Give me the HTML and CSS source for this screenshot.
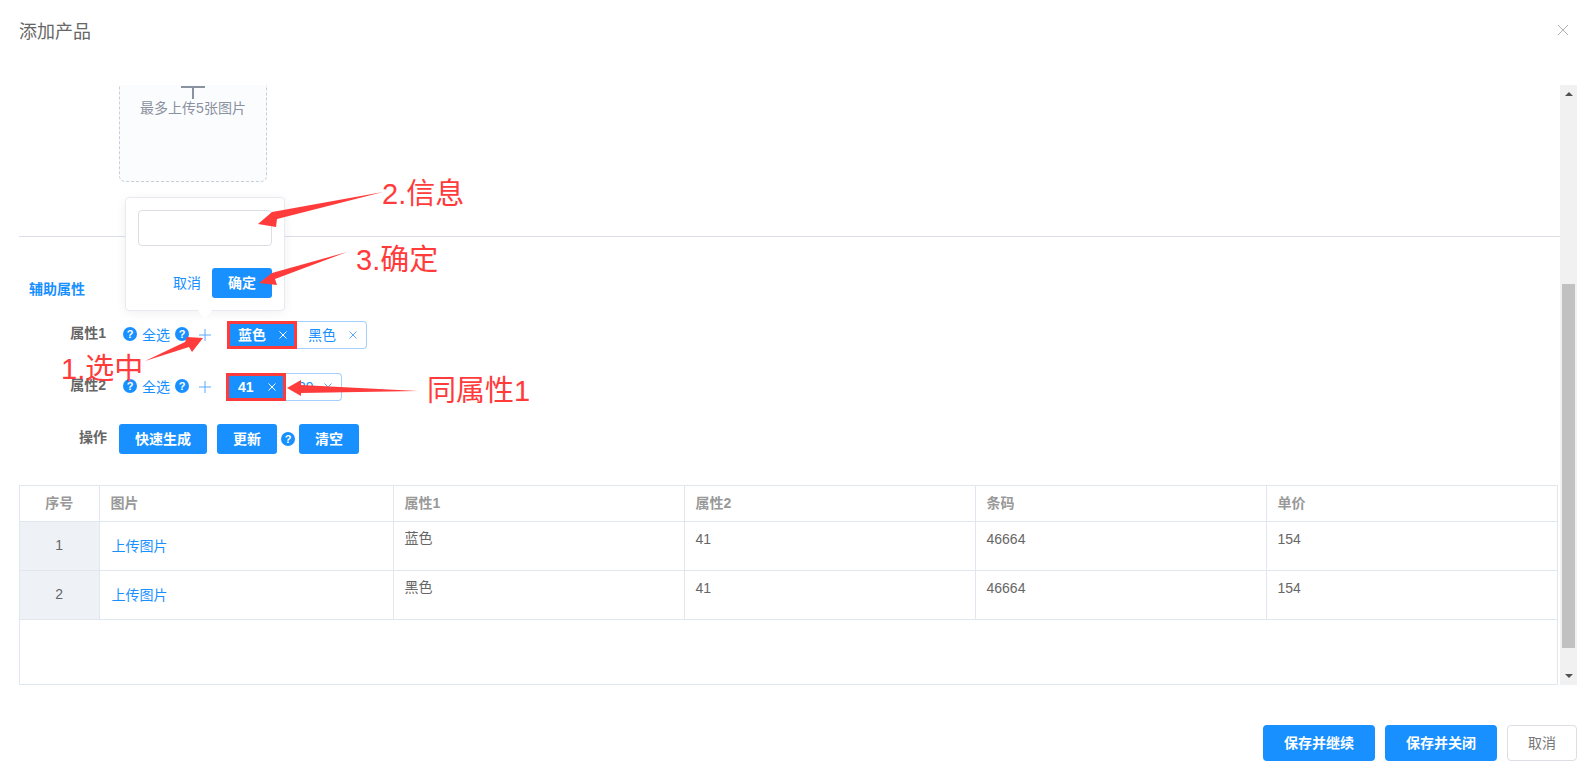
FILE: index.html
```html
<!DOCTYPE html>
<html lang="zh-CN">
<head>
  <meta charset="UTF-8">
  <title>添加产品</title>
  <link rel="stylesheet" href="styles.css">
</head>
<body>
  <div class="modal">
    <div class="modal-header">
      <span class="modal-title">添加产品</span>
      <svg class="modal-close" width="12" height="12" viewBox="0 0 12 12"><path d="M1 1l10 10M11 1L1 11" stroke="#b4b4b4" stroke-width="1" fill="none"/></svg>
    </div>

    <div class="modal-main">
      <div class="content">
        <!-- upload box, top part is scrolled away -->
        <div class="upload-box">
          <svg class="upload-plus" width="24" height="24" viewBox="0 0 24 24"><path d="M0 11h24v2H0zM11 11h2v13h-2z" fill="#8a919f"/></svg>
          <span>最多上传5张图片</span>
        </div>
        <div class="divider"></div>

        <div class="section-title">辅助属性</div>

        <div class="attr-row row-first">
          <span class="attr-label">属性1</span>
          <span class="help">?</span>
          <a class="link">全选</a>
          <span class="help">?</span>
          <svg class="plus" width="12" height="12" viewBox="0 0 12 12"><path d="M6 0v12M0 6h12" stroke="#5aaafa" stroke-width="1" fill="none"/></svg>
          <div class="tags">
            <span class="tag tag-on tag-w70"><b>蓝色</b><svg class="tag-x" width="8" height="8" viewBox="0 0 8 8"><path d="M.5.5l7 7M7.5.5l-7 7"/></svg></span>
            <span class="tag tag-w70">黑色<svg class="tag-x" width="8" height="8" viewBox="0 0 8 8"><path d="M.5.5l7 7M7.5.5l-7 7"/></svg></span>
          </div>
        </div>

        <div class="attr-row row-second">
          <span class="attr-label">属性2</span>
          <span class="help">?</span>
          <a class="link">全选</a>
          <span class="help">?</span>
          <svg class="plus" width="12" height="12" viewBox="0 0 12 12"><path d="M6 0v12M0 6h12" stroke="#5aaafa" stroke-width="1" fill="none"/></svg>
          <div class="tags tags-second">
            <span class="tag tag-on tag-w60"><b>41</b><svg class="tag-x" width="8" height="8" viewBox="0 0 8 8"><path d="M.5.5l7 7M7.5.5l-7 7"/></svg></span>
            <span class="tag tag-w56">39<svg class="tag-x" width="8" height="8" viewBox="0 0 8 8"><path d="M.5.5l7 7M7.5.5l-7 7"/></svg></span>
          </div>
        </div>

        <div class="attr-row action-row">
          <span class="attr-label">操作</span>
          <button class="btn btn-wide">快速生成</button>
          <button class="btn">更新</button>
          <span class="help">?</span>
          <button class="btn">清空</button>
        </div>

        <div class="table-wrap">
          <table class="sku-table">
            <colgroup>
              <col class="col-index"><col class="col-pic"><col class="col-attr"><col class="col-attr"><col class="col-attr"><col>
            </colgroup>
            <thead>
              <tr><th class="center">序号</th><th>图片</th><th>属性1</th><th>属性2</th><th>条码</th><th>单价</th></tr>
            </thead>
            <tbody>
              <tr><td class="index">1</td><td class="pic"><a class="link">上传图片</a></td><td>蓝色</td><td class="num">41</td><td class="num">46664</td><td class="num">154</td></tr>
              <tr><td class="index">2</td><td class="pic"><a class="link">上传图片</a></td><td>黑色</td><td class="num">41</td><td class="num">46664</td><td class="num">154</td></tr>
            </tbody>
          </table>
        </div>

        <!-- popover over the form -->
        <div class="popover">
          <div class="popover-input"></div>
          <div class="popover-actions">
            <a class="link">取消</a>
            <button class="btn">确定</button>
          </div>
        </div>
      </div>

      <div class="scrollbar">
        <span class="arrow-up"></span>
        <span class="thumb"></span>
        <span class="arrow-down"></span>
      </div>
    </div>

    <div class="modal-footer">
      <button class="btn btn-large">保存并继续</button>
      <button class="btn btn-large">保存并关闭</button>
      <button class="btn btn-cancel">取消</button>
    </div>
  </div>

  <!-- red notes drawn on top of the screenshot -->
  <svg class="notes-arrows" width="1596" height="778" viewBox="0 0 1596 778">
    <path d="M383 192L272 212L258 224L276 227L277 219Z" />
    <path d="M347 252L272 273L259 283L277 285L275 279Z" />
    <path d="M145 361L185 342L187 337L203 338L192 352L189 347Z" />
    <path d="M418 391L301 385L301 380L287 388L301 396L301 393Z" />
  </svg>
  <span class="note note-1">1.选中</span>
  <span class="note note-2">2.信息</span>
  <span class="note note-3">3.确定</span>
  <span class="note note-4">同属性1</span>
</body>
</html>
```

FILE: styles.css
```css
* {
  box-sizing: border-box;
}

body {
  margin: 0;
  background: #fff;
  font-family: "Liberation Sans", "Noto Sans CJK SC", sans-serif;
  font-size: 14px;
  color: #666;
  overflow: hidden;
}

.modal {
  width: 1596px;
  height: 778px;
  display: flex;
  flex-direction: column;
}

/* Header */
.modal-header {
  height: 85px;
  flex: none;
  display: flex;
  justify-content: space-between;
  padding: 21px 27px 0 19px;
}

.modal-title {
  font-size: 18px;
  line-height: 22px;
  color: #666;
}

.modal-close {
  margin-top: 3px;
}

/* Main */
.modal-main {
  height: 600px;
  flex: none;
  display: flex;
  padding-right: 19px;
}

.content {
  position: relative;
  flex: 1;
  padding-left: 19px;
  overflow: hidden;
}

.upload-box {
  width: 148px;
  height: 150px;
  margin: -53px 0 0 100px;
  padding-top: 42px;
  display: flex;
  flex-direction: column;
  align-items: center;
  border: 1px dashed #c5ced9;
  border-radius: 6px;
  background: #fbfcfe;
  color: #8a919f;
  line-height: 20px;
}

.upload-plus {
  display: block;
  margin-bottom: -1px;
}

.divider {
  height: 1px;
  margin-top: 54px;
  background: #dcdee6;
}

.section-title {
  margin: 42px 0 0 10px;
  line-height: 20px;
  color: #1890ff;
  font-weight: 700;
}

.attr-row {
  height: 28px;
  display: flex;
  align-items: center;
}

.row-first {
  margin-top: 22px;
}

.row-second {
  margin-top: 24px;
}

.attr-label {
  width: 88px;
  padding-right: 1px;
  text-align: right;
  font-weight: 700;
  color: #666;
  margin-top: -6px;
}

.link {
  color: #1890ff;
}

.attr-row .link {
  margin: -2px 5px 0 5px;
}

.help {
  width: 14px;
  height: 14px;
  flex: none;
  margin: -2px 0 0 16px;
  border-radius: 50%;
  background: #1890ff;
  color: #fff;
  font-size: 11px;
  font-weight: 700;
  line-height: 14px;
  text-align: center;
}

.attr-row .link + .help {
  margin-left: 0;
}

.plus {
  margin-left: 10px;
}

.tags {
  display: flex;
  margin-left: 16px;
}

.tags-second {
  margin-left: 15px;
}

.tag {
  height: 28px;
  display: flex;
  align-items: center;
  justify-content: space-between;
  padding: 0 9px 0 11px;
  border: 1px solid #a3d0fd;
  border-left: none;
  border-radius: 0 4px 4px 0;
  background: #fff;
  color: #1890ff;
  line-height: 26px;
}

.tag-x {
  flex: none;
  stroke: #5aaafa;
  stroke-width: 1;
  fill: none;
}

.tag-on {
  background: #1890ff;
  border-radius: 0;
  color: #fff;
  border: 3px solid #ff3b3b;
  padding: 0 7px 0 8px;
}

.tag-on b {
  font-weight: 700;
}

.tag-on .tag-x {
  stroke: #fff;
}

.tag-w70 { width: 70px; }
.tag-w60 { width: 60px; padding-left: 9px; }
.tag-w56 { width: 56px; padding-left: 12px; }

.action-row {
  height: 30px;
  margin-top: 23px;
}

.action-row .attr-label {
  padding-right: 0;
  margin-right: 12px;
  margin-top: -7px;
}

.btn {
  height: 30px;
  width: 60px;
  padding: 0 0 2px;
  border: none;
  border-radius: 3px;
  background: #1890ff;
  color: #fff;
  font-family: inherit;
  font-size: 14px;
  font-weight: 700;
}

.btn-wide {
  width: 88px;
  margin-right: 10px;
}

.action-row .help {
  margin: 0 4px 0 4px;
}

/* Table */
.table-wrap {
  width: 1539px;
  height: 200px;
  margin-top: 31px;
  border: 1px solid #e1e7ee;
}

.sku-table {
  width: 100%;
  table-layout: fixed;
  border-collapse: collapse;
}

.col-index { width: 79px; }
.col-pic { width: 294px; }
.col-attr { width: 291px; }

.sku-table th,
.sku-table td {
  border: 1px solid #e1e7ee;
  padding: 0 11px;
  text-align: left;
}

.sku-table tr > :first-child {
  border-left: none;
}

.sku-table tr > :last-child {
  border-right: none;
}

.sku-table thead th {
  border-top: none;
}

.sku-table th {
  height: 35px;
  padding-bottom: 2px;
  color: #999;
  font-weight: 700;
}

.sku-table td {
  height: 49px;
  vertical-align: top;
  padding-top: 5px;
  color: #666;
}

.sku-table td.num {
  padding-top: 9px;
}

.sku-table th.center,
.sku-table td.index {
  text-align: center;
}

.sku-table td.index {
  vertical-align: middle;
  padding: 0 0 2px;
  background: #eef1f6;
}

.sku-table td.pic {
  padding: 13px 0 0 12px;
}

/* Popover */
.popover {
  position: absolute;
  left: 125px;
  top: 112px;
  width: 160px;
  height: 114px;
  padding: 12px;
  background: #fff;
  border: 1px solid #e8eaf2;
  border-radius: 4px;
  box-shadow: 0 2px 12px rgba(0, 0, 0, 0.06);
}

.popover::after {
  content: "";
  position: absolute;
  left: 74px;
  bottom: -6px;
  width: 10px;
  height: 10px;
  background: #fff;
  transform: rotate(45deg);
}

.popover-input {
  width: 134px;
  height: 36px;
  border: 1px solid #dcdee6;
  border-radius: 4px;
}

.popover-actions {
  display: flex;
  justify-content: flex-end;
  align-items: center;
  margin-top: 22px;
}

.popover-actions .link {
  margin: -3px 11px 0 0;
}

/* Scrollbar */
.scrollbar {
  position: relative;
  width: 17px;
  flex: none;
  background: #f1f1f1;
}

.thumb {
  position: absolute;
  left: 2px;
  top: 199px;
  width: 13px;
  height: 364px;
  background: #c1c1c1;
}

.arrow-up,
.arrow-down {
  position: absolute;
  left: 5px;
  width: 0;
  height: 0;
  border-left: 4px solid transparent;
  border-right: 4px solid transparent;
}

.arrow-up {
  top: 7px;
  border-bottom: 4px solid #505050;
}

.arrow-down {
  bottom: 7px;
  border-top: 4px solid #505050;
}

/* Footer */
.modal-footer {
  flex: 1;
  display: flex;
  justify-content: flex-end;
  gap: 10px;
  padding: 40px 19px 0 0;
}

.btn-large {
  width: 112px;
  height: 36px;
  border-radius: 4px;
  font-size: 14px;
}

.btn-cancel {
  width: 70px;
  height: 36px;
  border: 1px solid #dcdee6;
  border-radius: 4px;
  background: #fff;
  color: #777;
  font-size: 14px;
  font-weight: 400;
}

/* Red notes */
.notes-arrows {
  position: absolute;
  left: 0;
  top: 0;
}

.notes-arrows path {
  fill: #ff3b3b;
}

.note {
  position: absolute;
  color: #ff3b3b;
  font-size: 29px;
  line-height: 36px;
  white-space: nowrap;
}

.note-1 { left: 61px; top: 351px; }
.note-2 { left: 382px; top: 176px; }
.note-3 { left: 356px; top: 242px; }
.note-4 { left: 427px; top: 373px; }
```
